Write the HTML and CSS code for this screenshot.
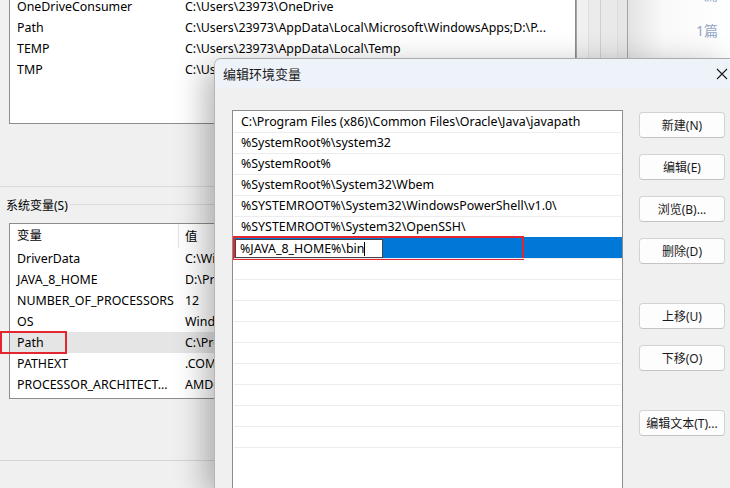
FILE: index.html
```html
<!DOCTYPE html>
<html lang="zh-CN">
<head>
    <meta charset="UTF-8">
    <title>编辑环境变量</title>
    <link rel="stylesheet" href="styles.css">
</head>
<body>

    <div class="env-window">
        <div class="env-main">
            <div class="listbox user-vars">
                <div class="lv-row"><span class="lv-name">OneDriveConsumer</span><span class="lv-val">C:\Users\23973\OneDrive</span></div>
                <div class="lv-row"><span class="lv-name">Path</span><span class="lv-val">C:\Users\23973\AppData\Local\Microsoft\WindowsApps;D:\P...</span></div>
                <div class="lv-row"><span class="lv-name">TEMP</span><span class="lv-val">C:\Users\23973\AppData\Local\Temp</span></div>
                <div class="lv-row"><span class="lv-name">TMP</span><span class="lv-val">C:\Users\23973\AppData\Local\Temp</span></div>
            </div>

            <div class="group-sep"></div>
            <div class="group-title"><span>系统变量(S)</span></div>

            <div class="listbox sys-vars">
                <div class="lv-head"><span class="lv-name">变量</span><span class="lv-val">值</span></div>
                <div class="lv-row"><span class="lv-name">DriverData</span><span class="lv-val">C:\Windows\System32\Drivers\DriverData</span></div>
                <div class="lv-row"><span class="lv-name">JAVA_8_HOME</span><span class="lv-val">D:\Program Files\Java\jdk1.8.0</span></div>
                <div class="lv-row"><span class="lv-name">NUMBER_OF_PROCESSORS</span><span class="lv-val">12</span></div>
                <div class="lv-row"><span class="lv-name">OS</span><span class="lv-val">Windows_NT</span></div>
                <div class="lv-row is-hover"><span class="lv-name">Path</span><span class="lv-val">C:\Program Files (x86)\Common Files</span></div>
                <div class="lv-row"><span class="lv-name">PATHEXT</span><span class="lv-val">.COM;.EXE;.BAT;.CMD</span></div>
                <div class="lv-row"><span class="lv-name">PROCESSOR_ARCHITECT...</span><span class="lv-val">AMD64</span></div>
            </div>

            <div class="bottom-sep"></div>
            <div class="mark mark-path"></div>
        </div>

        <div class="env-strip"></div>

        <div class="env-side">
            <div class="side-count top-count">1篇</div>
            <div class="side-count">1篇</div>
        </div>
    </div>

    <!-- dialog on top of the env window -->
    <div class="dialog">
        <div class="dialog-title">
            <span>编辑环境变量</span>
            <svg class="close-x" width="12" height="12" viewBox="0 0 12 12">
                <path d="M1 1 L11 11 M11 1 L1 11" stroke="#1a1a1a" stroke-width="1.1" fill="none"/>
            </svg>
        </div>
        <div class="dialog-body">
            <div class="path-list">
                <div class="path-row">C:\Program Files (x86)\Common Files\Oracle\Java\javapath</div>
                <div class="path-row">%SystemRoot%\system32</div>
                <div class="path-row">%SystemRoot%</div>
                <div class="path-row">%SystemRoot%\System32\Wbem</div>
                <div class="path-row">%SYSTEMROOT%\System32\WindowsPowerShell\v1.0\</div>
                <div class="path-row">%SYSTEMROOT%\System32\OpenSSH\</div>
                <div class="path-row selected">
                    <span class="path-edit">%JAVA_8_HOME%\bin<i class="caret"></i></span>
                    <div class="mark mark-edit"></div>
                </div>
                <div class="path-row"></div>
                <div class="path-row"></div>
                <div class="path-row"></div>
                <div class="path-row"></div>
                <div class="path-row"></div>
                <div class="path-row"></div>
                <div class="path-row"></div>
                <div class="path-row"></div>
                <div class="path-row"></div>
                <div class="path-row"></div>
            </div>
            <div class="dialog-buttons">
                <button class="btn">新建(N)</button>
                <button class="btn">编辑(E)</button>
                <button class="btn">浏览(B)...</button>
                <button class="btn">删除(D)</button>
                <button class="btn spaced">上移(U)</button>
                <button class="btn">下移(O)</button>
                <button class="btn spaced">编辑文本(T)...</button>
            </div>
        </div>
    </div>

</body>
</html>
```

FILE: styles.css
```css
* {
    box-sizing: border-box;
}

body {
    margin: 0;
    width: 730px;
    height: 488px;
    overflow: hidden;
    position: relative;
    font-family: "Noto Sans", "Noto Sans CJK SC", sans-serif;
    font-size: 12.4px;
    color: #000;
    background: #f0f0f0;
}

/* background window */
.env-window {
    display: flex;
    height: 488px;
    overflow: hidden;
}

.env-main {
    width: 576px;
    position: relative;
}

.listbox {
    margin-left: 9px;
    width: 567px;
    background: white;
    border: 1px solid #8c8c8c;
    overflow: hidden;
}

.user-vars {
    margin-top: -5px;
    height: 129px;
}

.lv-row, .lv-head {
    display: flex;
    height: 21px;
    align-items: center;
    white-space: nowrap;
}

.lv-name {
    width: 175px;
    padding-left: 7px;
    flex-shrink: 0;
    overflow: hidden;
}

.lv-head {
    height: 24px;
}

.lv-head .lv-name {
    width: 169px;
    border-right: 1px solid #e5e5e5;
    height: 24px;
    line-height: 24px;
    margin-right: 6px;
}

.lv-row.is-hover {
    background: #e5e5e5;
}

.group-sep {
    margin-top: 62px;
    height: 1px;
    background: #dadada;
}

.group-title {
    margin-top: 9px;
    height: 18px;
    display: flex;
    align-items: center;
    padding-left: 6px;
    font-size: 12px;
}

.group-title::after {
    content: "";
    flex: 1;
    height: 1px;
    margin-top: -2px;
    margin-left: 2px;
    background: #dadada;
}

.sys-vars {
    margin-top: 9px;
    height: 176px;
}

.bottom-sep {
    margin-top: 61px;
    height: 1px;
    background: #d6d6d6;
}

.mark {
    position: absolute;
    border: 2px solid #e3262f;
}

.mark-path {
    left: 0;
    top: 331px;
    width: 67px;
    height: 23px;
}

.env-strip {
    width: 51px;
    border-left: 1px solid #a5a5a5;
    background: linear-gradient(to right,
        #f0f0f0 0 11px, #dedede 11px 12px,
        #ebebeb 12px 23px, #cfcfcf 23px 24px,
        #e9e9e9 24px 40px, #dddddd 40px 41px,
        #e6e6e6 41px 50px);
}

.env-side {
    flex: 1;
    border-left: 1px solid #a5a5a5;
    background: linear-gradient(to right, #e3e3e3, #f9f9f9 35%, #fff);
    padding-left: 68px;
}

.side-count {
    color: #93a5c4;
    font-size: 14px;
    margin-top: 16px;
}

.top-count {
    margin-top: -16px;
}

/* edit dialog */
.dialog {
    position: absolute;
    left: 214px;
    top: 58px;
    right: 0;
    bottom: 0;
    overflow: hidden;
    background: #f0f0f0;
    border-top: 1px solid #ababab;
    border-left: 1px solid #b5b5b5;
    border-top-left-radius: 7px;
    box-shadow: -8px 8px 32px rgba(0, 0, 0, 0.3);
}

.dialog-title {
    height: 29px;
    background: #eef2f9;
    display: flex;
    align-items: center;
    justify-content: space-between;
    padding-left: 8px;
    padding-right: 2px;
    font-size: 13px;
    color: #1a1a1a;
}

.dialog-body {
    display: flex;
    align-items: flex-start;
    padding: 22px 0 0 17px;
    gap: 16px;
}

.path-list {
    width: 391px;
    height: 380px;
    background: white;
    border: 1px solid #8c8c8c;
    overflow: hidden;
}

.path-row {
    height: 21px;
    line-height: 20px;
    padding-left: 7px;
    border-top: 1px solid #ececec;
    margin: 0 1px;
    white-space: nowrap;
    position: relative;
}

.path-row:first-child {
    border-top-color: transparent;
}

.path-row.selected {
    background: #0078d7;
    border-top-color: #0078d7;
    margin: 0;
    padding-left: 2px;
    padding-top: 1px;
}

.path-edit {
    display: inline-block;
    width: 148px;
    height: 19px;
    line-height: 18px;
    background: white;
    border: 1px solid #444;
    padding-left: 4px;
    vertical-align: top;
}

.caret {
    display: inline-block;
    width: 1px;
    height: 14px;
    background: #000;
    vertical-align: -3px;
}

.mark-edit {
    left: 0;
    top: -2px;
    width: 291px;
    height: 24px;
}

.dialog-buttons {
    display: flex;
    flex-direction: column;
    padding-top: 2px;
}

.btn {
    width: 86px;
    height: 26px;
    margin-bottom: 16px;
    background: #fdfdfd;
    border: 1px solid #d3d3d3;
    border-bottom-color: #c4c4c4;
    border-radius: 4px;
    font-family: "Noto Sans", "Noto Sans CJK SC", sans-serif;
    font-size: 12px;
    color: #1a1a1a;
    padding: 0;
    white-space: nowrap;
}

.btn.spaced {
    margin-top: 23px;
}
```
